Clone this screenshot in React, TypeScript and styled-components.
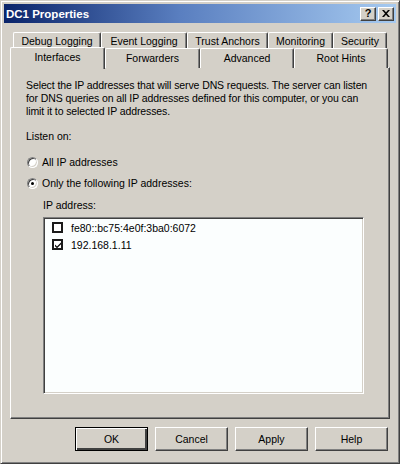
import React from "react";
import styled, { createGlobalStyle } from "styled-components";

const GlobalStyle = createGlobalStyle`
	body {
		margin: 0;
		background: #d4d0c8;
		font-family: "Liberation Sans", Arial, sans-serif;
	}
`;

const topTabs = ["Debug Logging", "Event Logging", "Trust Anchors", "Monitoring", "Security"];
const topWidths = [88, 86, 81, 65, 54];
const frontTabs = ["Interfaces", "Forwarders", "Advanced", "Root Hints"];
const frontWidths = [95, 95, 94, 94];

const App = () => {
	return (
		<>
			<GlobalStyle />
			<Window>
				<TitleBar>
					<Title>DC1 Properties</Title>
					<TitleButtons>
						<CaptionButton>?</CaptionButton>
						<CaptionButton>
							<svg width="8" height="7" viewBox="0 0 8 7">
								<path d="M0 0h2l2 2.3L6 0h2L5 3.5 8 7H6L4 4.7 2 7H0l3-3.5z" fill="#000" />
							</svg>
						</CaptionButton>
					</TitleButtons>
				</TitleBar>
				<Content>
					<TabStrip>
						<TabRow $indent={3}>
							{topTabs.map((t, i) => (
								<Tab key={t} style={{ width: topWidths[i] }} $height={17}>
									{t}
								</Tab>
							))}
						</TabRow>
						<TabRow $indent={0}>
							{frontTabs.map((t, i) => (
								<Tab
									key={t}
									style={{ width: frontWidths[i] }}
									$height={20}
									$selected={i === 0}
								>
									{t}
								</Tab>
							))}
						</TabRow>
					</TabStrip>
					<Panel>
						<Paragraph>
							Select the IP addresses that will serve DNS requests. The server can listen
							for DNS queries on all IP addresses defined for this computer, or you can
							limit it to selected IP addresses.
						</Paragraph>
						<Label>Listen on:</Label>
						<OptionRow $top={12}>
							<Radio />
							All IP addresses
						</OptionRow>
						<OptionRow $top={7}>
							<Radio $checked />
							Only the following IP addresses:
						</OptionRow>
						<IndentBlock>
							<Label>IP address:</Label>
							<ListBox>
								<ListItem>
									<CheckBox />
									fe80::bc75:4e0f:3ba0:6072
								</ListItem>
								<ListItem>
									<CheckBox>
										<svg width="8" height="8" viewBox="0 0 8 8">
											<path d="M1 3.5l2 2 4-4v1.8l-4 4-2-2z" fill="#000" />
										</svg>
									</CheckBox>
									192.168.1.11
								</ListItem>
							</ListBox>
						</IndentBlock>
					</Panel>
					<ButtonRow>
						<DialogButton $default>OK</DialogButton>
						<DialogButton>Cancel</DialogButton>
						<DialogButton>Apply</DialogButton>
						<DialogButton>Help</DialogButton>
					</ButtonRow>
				</Content>
			</Window>
		</>
	);
};

const Window = styled.div`
	width: 400px;
	height: 464px;
	box-sizing: border-box;
	display: flex;
	flex-direction: column;
	background: #d4d0c8;
	border: 1px solid;
	border-color: #d4d0c8 #404040 #404040 #d4d0c8;
	box-shadow: inset 1px 1px #ffffff, inset -1px -1px #808080;
	padding: 3px;
	font-size: 10.5px;
	color: #000;
`;

const TitleBar = styled.div`
	height: 19px;
	display: flex;
	align-items: center;
	justify-content: space-between;
	padding: 0 2px 0 2px;
	background: linear-gradient(to right, #0a246a, #5a7fc0 45%, #a6caf0);
`;

const Title = styled.span`
	color: #fff;
	font-weight: bold;
	font-size: 11.5px;
`;

const TitleButtons = styled.div`
	display: flex;
	gap: 2px;
`;

const CaptionButton = styled.div`
	width: 16px;
	height: 14px;
	box-sizing: border-box;
	display: grid;
	place-items: center;
	background: #d4d0c8;
	border: 1px solid;
	border-color: #ffffff #404040 #404040 #ffffff;
	box-shadow: inset -1px -1px #808080;
	font-weight: bold;
	font-size: 11px;
	line-height: 1;
`;

const Content = styled.div`
	flex: 1;
	display: flex;
	flex-direction: column;
	padding: 9px 6px 0 6px;
`;

const TabStrip = styled.div`
	display: flex;
	flex-direction: column;
	position: relative;
	z-index: 1;
`;

const TabRow = styled.div<{ $indent: number }>`
	display: flex;
	padding-left: ${(p) => p.$indent}px;
	margin-bottom: -1px;
`;

const Tab = styled.div<{ $height: number; $selected?: boolean }>`
	height: ${(p) => p.$height}px;
	box-sizing: border-box;
	display: flex;
	align-items: center;
	justify-content: center;
	background: #d4d0c8;
	border-top: 1px solid #ffffff;
	border-left: 1px solid #ffffff;
	border-right: 1px solid #404040;
	box-shadow: inset -1px 0 #808080;
	border-radius: 2px 2px 0 0;
	padding-bottom: ${(p) => (p.$selected ? 4 : 1)}px;
	${(p) =>
		p.$selected &&
		`
		height: ${p.$height + 2}px;
		margin-top: -1px;
		margin-bottom: -1px;
		position: relative;
		z-index: 2;
	`}
`;

const Panel = styled.div`
	height: 352px;
	box-sizing: border-box;
	border: 1px solid;
	border-color: #ffffff #404040 #404040 #ffffff;
	box-shadow: inset -1px -1px #808080;
	padding: 11px 14px 0 15px;
	display: flex;
	flex-direction: column;
`;

const Paragraph = styled.p`
	margin: 0;
	line-height: 13px;
	letter-spacing: -0.1px;
`;

const Label = styled.div`
	line-height: 13px;
	margin-top: 12px;
`;

const OptionRow = styled.div<{ $top: number }>`
	display: flex;
	align-items: center;
	height: 14px;
	margin-top: ${(p) => p.$top}px;
	gap: 4px;
	padding-left: 1px;
`;

const Radio = styled.span<{ $checked?: boolean }>`
	width: 11px;
	height: 11px;
	box-sizing: border-box;
	border-radius: 50%;
	background: #fff;
	border: 1px solid;
	border-color: #808080 #ffffff #ffffff #808080;
	box-shadow: inset 1px 1px #404040, inset -1px -1px #d4d0c8;
	position: relative;
	&::after {
		content: "";
		display: ${(p) => (p.$checked ? "block" : "none")};
		position: absolute;
		left: 3px;
		top: 3px;
		width: 3px;
		height: 3px;
		border-radius: 50%;
		background: #000;
	}
`;

const IndentBlock = styled.div`
	display: flex;
	flex-direction: column;
	padding-left: 17px;
	margin-top: -3px;
`;

const ListBox = styled.div`
	width: 321px;
	height: 177px;
	box-sizing: border-box;
	margin-top: 5px;
	background: #fbfefe;
	border: 1px solid;
	border-color: #808080 #ffffff #ffffff #808080;
	box-shadow: inset 1px 1px #404040, inset -1px -1px #d4d0c8;
	padding: 3px 0 0 8px;
	display: flex;
	flex-direction: column;
	gap: 4px;
`;

const ListItem = styled.div`
	display: flex;
	align-items: center;
	height: 13px;
	gap: 8px;
`;

const CheckBox = styled.span`
	width: 11px;
	height: 11px;
	box-sizing: border-box;
	border: 2px solid #1a1a1a;
	background: #fff;
	display: grid;
	place-items: center;
`;

const ButtonRow = styled.div`
	display: flex;
	justify-content: flex-end;
	gap: 7px;
	padding-right: 2px;
	margin-top: 8px;
`;

const DialogButton = styled.button<{ $default?: boolean }>`
	width: 73px;
	height: 24px;
	box-sizing: border-box;
	padding: 0;
	background: #d4d0c8;
	font-family: inherit;
	font-size: 10.5px;
	color: #000;
	border: 1px solid;
	border-color: ${(p) => (p.$default ? "#000" : "#ffffff #404040 #404040 #ffffff")};
	box-shadow: ${(p) =>
		p.$default
			? "inset 1px 1px #ffffff, inset -2px -2px #404040"
			: "inset -1px -1px #808080"};
`;

export default App;
